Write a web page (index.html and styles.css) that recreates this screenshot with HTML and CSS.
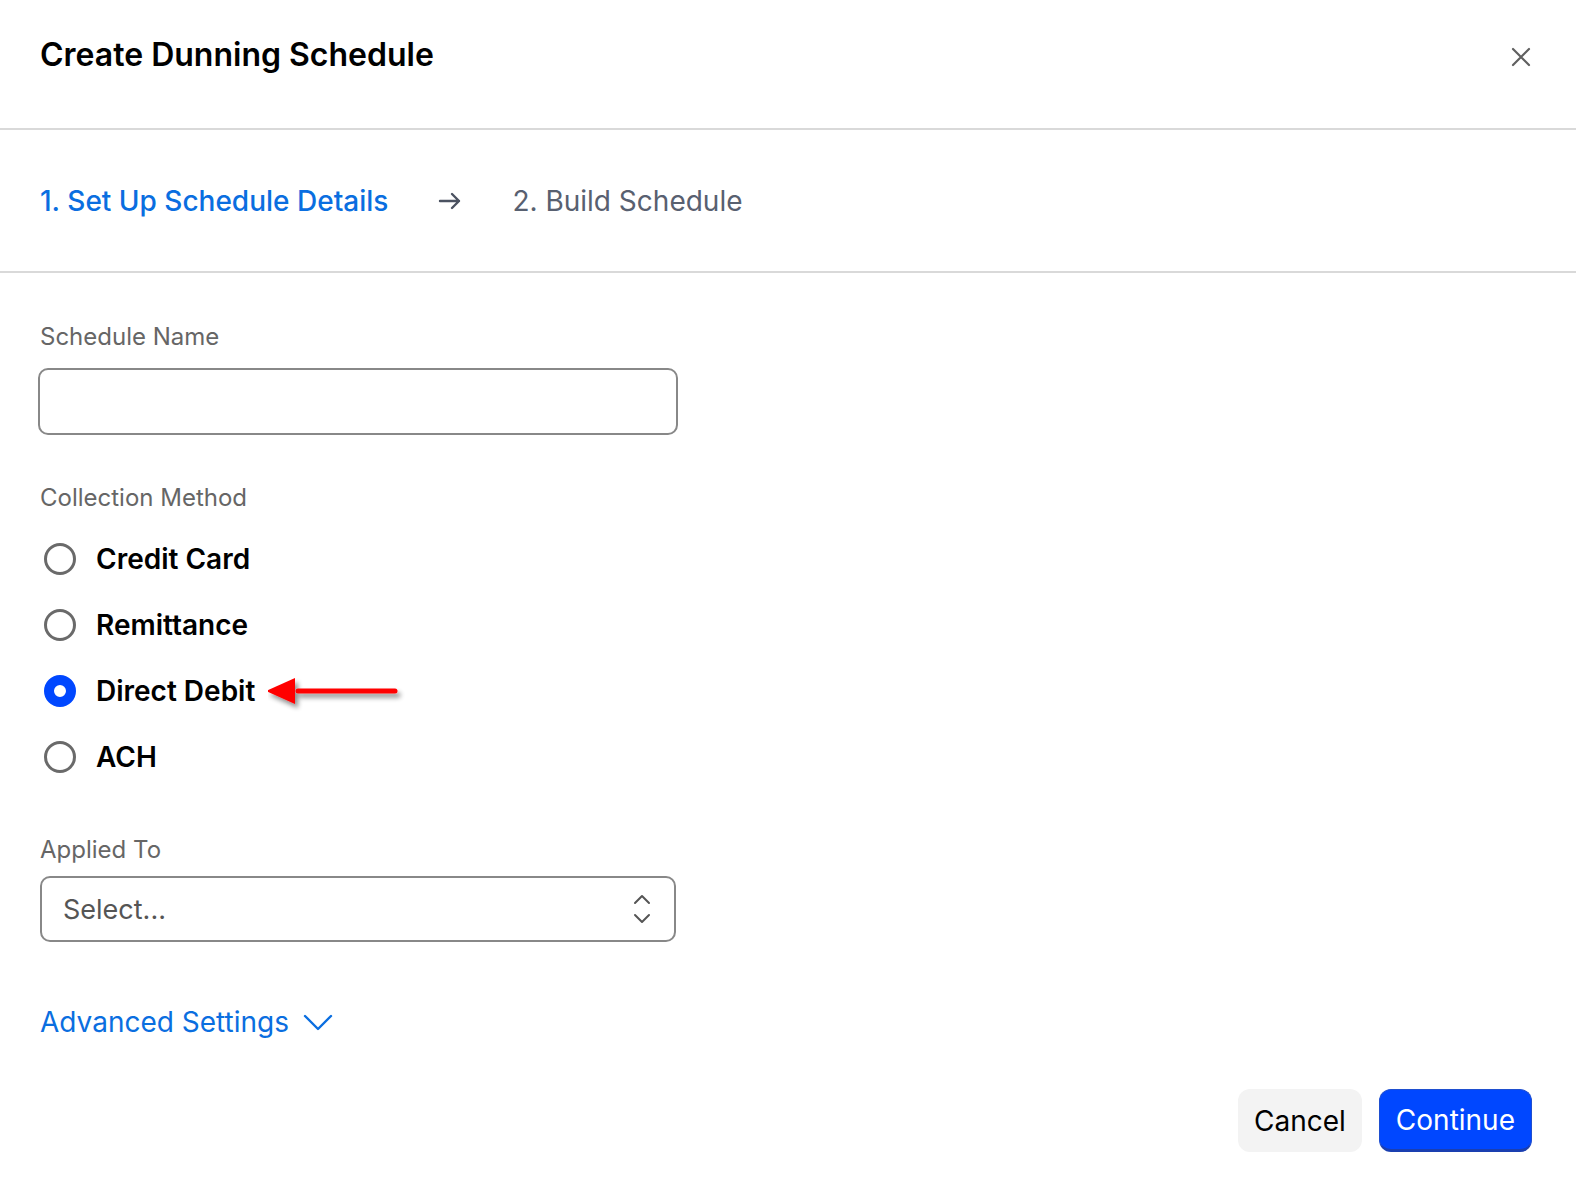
FILE: index.html
```html
<!DOCTYPE html>
<html lang="en">
<head>
<meta charset="UTF-8">
<meta name="viewport" content="width=device-width, initial-scale=1.0">
<title>Create Dunning Schedule</title>
<link rel="stylesheet" href="styles.css">
</head>
<body>

<div class="modal">

    <div class="modal-head">
        <h1 class="title">Create Dunning Schedule</h1>
        <button class="close" aria-label="Close">
            <svg width="22" height="22" viewBox="0 0 22 22"><path d="M3 3 L19 19 M19 3 L3 19" stroke="#606060" stroke-width="2.2" stroke-linecap="round"/></svg>
        </button>
    </div>

    <div class="steps">
        <span class="step active">1. Set Up Schedule Details</span>
        <svg class="step-arrow" width="24" height="24" viewBox="0 0 24 24"><path d="M2 12 H21 M14 5 L21 12 L14 19" fill="none" stroke="#4b5261" stroke-width="2.4" stroke-linecap="round" stroke-linejoin="round"/></svg>
        <span class="step">2. Build Schedule</span>
    </div>

    <div class="body">

        <div class="field">
            <label class="label">Schedule Name</label>
            <input class="input" type="text">
        </div>

        <div class="field methods">
            <div class="label">Collection Method</div>
            <div class="radios">
                <label class="radio"><span class="dot"></span>Credit Card</label>
                <label class="radio"><span class="dot"></span>Remittance</label>
                <label class="radio checked"><span class="dot"></span>Direct Debit
                    <svg class="pointer" width="140" height="40" viewBox="0 0 140 40">
                        <defs>
                            <filter id="sh" x="-20%" y="-50%" width="140%" height="200%">
                                <feGaussianBlur in="SourceAlpha" stdDeviation="2.5"/>
                                <feOffset dx="3" dy="4"/>
                                <feComponentTransfer><feFuncA type="linear" slope="0.45"/></feComponentTransfer>
                                <feMerge><feMergeNode/><feMergeNode in="SourceGraphic"/></feMerge>
                            </filter>
                        </defs>
                        <g filter="url(#sh)">
                            <path d="M30 18 H127" stroke="#ff0000" stroke-width="5" stroke-linecap="round"/>
                            <path d="M-2 18 L27 5 L27 31 Z" fill="#ff0000"/>
                        </g>
                    </svg>
                </label>
                <label class="radio"><span class="dot"></span>ACH</label>
            </div>
        </div>

        <div class="field">
            <div class="label tight">Applied To</div>
            <div class="select">
                <span>Select...</span>
                <svg width="20" height="32" viewBox="0 0 20 32"><path d="M3 10 L10 3 L17 10 M3 22 L10 29 L17 22" fill="none" stroke="#555" stroke-width="2" stroke-linecap="round" stroke-linejoin="round"/></svg>
            </div>
        </div>

        <a class="advanced" href="#">Advanced Settings
            <svg width="30" height="20" viewBox="0 0 30 20"><path d="M2 4 L15 17 L28 4" fill="none" stroke="#0a6ee0" stroke-width="2.4" stroke-linecap="round" stroke-linejoin="round"/></svg>
        </a>

    </div>

    <div class="actions">
        <button class="btn cancel">Cancel</button>
        <button class="btn primary">Continue</button>
    </div>

</div>

</body>
</html>
```

FILE: styles.css
```css
body {
    margin: 0;
    background: #fff;
    color: #000;
    font-family: Inter, "Noto Sans", sans-serif;
    overflow: hidden;
}

.modal {
    height: 1200px;
    display: flex;
    flex-direction: column;
}

/* head */
.modal-head {
    height: 130px;
    display: flex;
    align-items: flex-start;
    justify-content: space-between;
    padding: 0 40px 0 40px;
    border-bottom: 2px solid #d9d9d9;
    box-sizing: border-box;
}

.title {
    margin: 35px 0 0;
    font-size: 32px;
    font-weight: 600;
}

.close {
    margin-top: 46px;
    margin-right: 4px;
    padding: 0;
    border: 0;
    background: none;
    line-height: 0;
}

/* steps */
.steps {
    height: 143px;
    display: flex;
    align-items: center;
    padding: 0 40px;
    border-bottom: 2px solid #d9d9d9;
    box-sizing: border-box;
}

.step {
    font-size: 28px;
    color: #586070;
}

.step.active {
    color: #0a6ee0;
    font-weight: 500;
}

.step-arrow {
    margin: 0 50px 0 50px;
}

/* form */
.body {
    padding: 49px 40px 0;
    flex: 1;
}

.field {
    margin-bottom: 48px;
}

.field.methods {
    margin-bottom: 62px;
}

.label {
    display: block;
    font-size: 24px;
    color: #666;
    margin-bottom: 17px;
}

.label.tight {
    margin-bottom: 12px;
}

.input {
    display: block;
    width: 640px;
    height: 67px;
    margin-left: -2px;
    box-sizing: border-box;
    border: 2px solid #888;
    border-radius: 10px;
    font-size: 26px;
    font-family: inherit;
}

.radios {
    display: flex;
    flex-direction: column;
    gap: 34px;
    margin-top: 31px;
}

.radio {
    display: flex;
    align-items: center;
    height: 32px;
    font-size: 28px;
    font-weight: 600;
    position: relative;
}

.dot {
    width: 32px;
    height: 32px;
    box-sizing: border-box;
    border: 3px solid #6a6a6a;
    border-radius: 50%;
    margin: 0 20px 0 4px;
}

.radio.checked .dot {
    border: 10px solid #0047ff;
}

.pointer {
    margin-left: 13px;
    margin-top: 4px;
}

.select {
    width: 636px;
    height: 66px;
    box-sizing: border-box;
    border: 2px solid #888;
    border-radius: 10px;
    display: flex;
    align-items: center;
    justify-content: space-between;
    padding: 0 22px 0 21px;
    font-size: 27px;
    color: #555;
}

.advanced {
    display: inline-flex;
    align-items: center;
    gap: 14px;
    margin-top: 15px;
    font-size: 28px;
    color: #0a6ee0;
    text-decoration: none;
}

/* footer */
.actions {
    display: flex;
    justify-content: flex-end;
    gap: 17px;
    padding: 0 44px 48px;
}

.btn {
    height: 63px;
    border-radius: 12px;
    font-family: inherit;
    font-size: 28px;
    padding: 0 16px;
    border: 0;
}

.cancel {
    background: #f3f3f3;
    color: #000;
}

.primary {
    background: #0047ff;
    color: #fff;
    border: 1px solid #1f4fd0;
    border-bottom: 3px solid #1a3fb0;
}
```
